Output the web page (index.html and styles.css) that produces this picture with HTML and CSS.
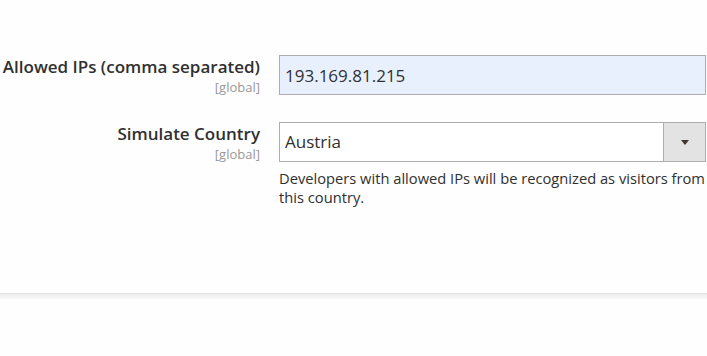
FILE: index.html
```html
<!DOCTYPE html>
<html lang="en">

<head>
    <meta http-equiv='Content-Type' content='text/html; charset=utf-8' />
    <meta name='viewport' content='width=device-width' />
    <link rel="stylesheet" href="styles.css">
</head>

<body>
    <div class="section">
        <div class="row">
            <div class="label">
                <span class="name">Allowed IPs (comma separated)</span>
                <span class="scope">[global]</span>
            </div>
            <div class="value">
                <input class="text autofill" type="text" value="193.169.81.215">
            </div>
        </div>
        <div class="row">
            <div class="label">
                <span class="name">Simulate Country</span>
                <span class="scope">[global]</span>
            </div>
            <div class="value">
                <div class="select">
                    <span class="selected">Austria</span>
                    <span class="arrow"></span>
                </div>
                <p class="note">Developers with allowed IPs will be recognized as visitors from this country.</p>
            </div>
        </div>
    </div>
    <div class="divider"></div>
</body>

</html>
```

FILE: styles.css
```css
body {
    margin: 0;
    background-color: #fefefe;
    font-family: "Open Sans", sans-serif;
    color: #303030;
    overflow: hidden;
}

.section {
    padding-top: 55px;
    height: 293px;
    box-sizing: border-box;
}

.row {
    display: grid;
    grid-template-columns: 260px 427px;
    column-gap: 19px;
    margin-bottom: 27px;
}

.label {
    display: flex;
    flex-direction: column;
    align-items: flex-end;
    text-align: right;
    white-space: nowrap;
}

.name {
    font-weight: 600;
    font-size: 17px;
    line-height: 24px;
}

.scope {
    font-size: 13px;
    line-height: 16px;
    color: #999999;
}

.text {
    display: block;
    width: 100%;
    height: 40px;
    box-sizing: border-box;
    border: 1px solid #adadad;
    padding: 0 5px;
    font-family: "Open Sans", sans-serif;
    font-size: 17px;
    color: #303030;
    outline: none;
}

.autofill {
    background-color: #e8f0fe;
}

.select {
    display: flex;
    height: 40px;
    box-sizing: border-box;
    border: 1px solid #adadad;
    background-color: #ffffff;
}

.selected {
    flex: 1;
    padding: 0 5px;
    font-size: 17px;
    line-height: 38px;
}

.arrow {
    width: 41px;
    border-left: 1px solid #adadad;
    background-color: #e3e3e3;
    display: flex;
    align-items: center;
    justify-content: center;
}

.arrow::after {
    content: "";
    border-left: 4px solid transparent;
    border-right: 4px solid transparent;
    border-top: 5px solid #41362f;
}

.note {
    margin: 7px -6px 0 0;
    font-size: 14.7px;
    line-height: 19px;
    color: #303030;
}

.divider {
    height: 5px;
    border-top: 1px solid #e3e3e3;
    background: linear-gradient(#ededed, #f8f8f8);
}
```
